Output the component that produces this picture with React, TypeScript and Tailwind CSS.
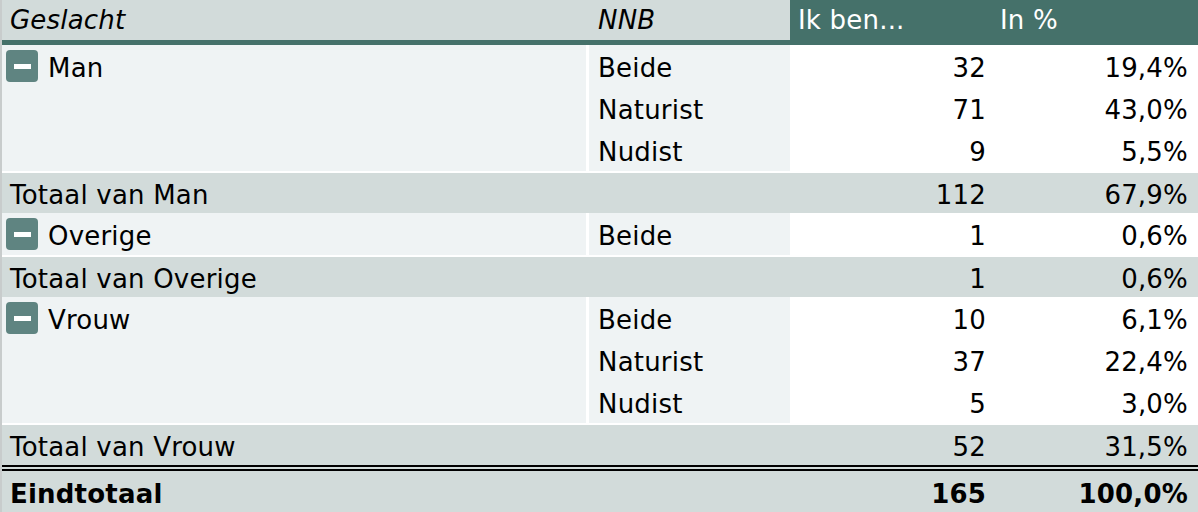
const groups = [
  {
    name: "Man",
    rows: [
      { nnb: "Beide", count: "32", pct: "19,4%" },
      { nnb: "Naturist", count: "71", pct: "43,0%" },
      { nnb: "Nudist", count: "9", pct: "5,5%" },
    ],
    total: { count: "112", pct: "67,9%" },
  },
  {
    name: "Overige",
    rows: [{ nnb: "Beide", count: "1", pct: "0,6%" }],
    total: { count: "1", pct: "0,6%" },
  },
  {
    name: "Vrouw",
    rows: [
      { nnb: "Beide", count: "10", pct: "6,1%" },
      { nnb: "Naturist", count: "37", pct: "22,4%" },
      { nnb: "Nudist", count: "5", pct: "3,0%" },
    ],
    total: { count: "52", pct: "31,5%" },
  },
];

function MinusBox() {
  return (
    <span className="flex h-[32px] w-[32px] shrink-0 items-center justify-center rounded-[4px] bg-[#5f8481]">
      <span className="h-[5px] w-[17px] bg-white" />
    </span>
  );
}

export default function App() {
  return (
    <div
      className="h-[512px] w-[1198px] overflow-hidden border-l-2 border-[#c8cccc] bg-white text-[26px] leading-none tracking-[0.2px] text-black"
      style={{ fontFamily: '"DejaVu Sans", Verdana, sans-serif' }}
    >
      {/* header */}
      <div className="flex h-[40px] items-center bg-[#d2dbda]">
        <div className="w-[587px] pl-[8px] italic">Geslacht</div>
        <div className="w-[201px] pl-[9px] italic">NNB</div>
        <div className="flex h-full flex-1 items-center bg-[#45716a] text-white">
          <div className="w-[202px] pl-[8px]">Ik ben...</div>
          <div className="flex-1 pl-[8px]">In %</div>
        </div>
      </div>
      <div className="h-[5px] bg-[#45716a]" />

      {groups.map((g) => (
        <div key={g.name}>
          <div className="flex border-b-2 border-white">
            <div className="w-[587px] border-r-[3px] border-white bg-[#eff3f4]">
              <div className="flex h-[42px] items-center gap-[10px] pl-[4px]">
                <MinusBox />
                <span className="pt-[3px]">{g.name}</span>
              </div>
            </div>
            <div className="flex-1">
              {g.rows.map((r) => (
                <div key={r.nnb} className="flex h-[42px]">
                  <div className="flex w-[201px] items-center bg-[#eff3f4] pl-[9px] pt-[3px]">{r.nnb}</div>
                  <div className="flex w-[202px] items-center justify-end pr-[6px] pt-[3px]">{r.count}</div>
                  <div className="flex flex-1 items-center justify-end pr-[10px] pt-[3px]">{r.pct}</div>
                </div>
              ))}
            </div>
          </div>
          <div className="flex h-[40px] items-center bg-[#d2dbda] pt-[3px]">
            <div className="w-[788px] pl-[8px]">Totaal van {g.name}</div>
            <div className="w-[202px] pr-[6px] text-right">{g.total.count}</div>
            <div className="flex-1 pr-[10px] text-right">{g.total.pct}</div>
          </div>
        </div>
      ))}

      <div className="flex h-[48px] items-center border-t-[6px] border-double border-black bg-[#d2dbda] pt-[3px] font-bold">
        <div className="w-[788px] pl-[8px]">Eindtotaal</div>
        <div className="w-[202px] pr-[6px] text-right">165</div>
        <div className="flex-1 pr-[10px] text-right">100,0%</div>
      </div>
    </div>
  );
}
